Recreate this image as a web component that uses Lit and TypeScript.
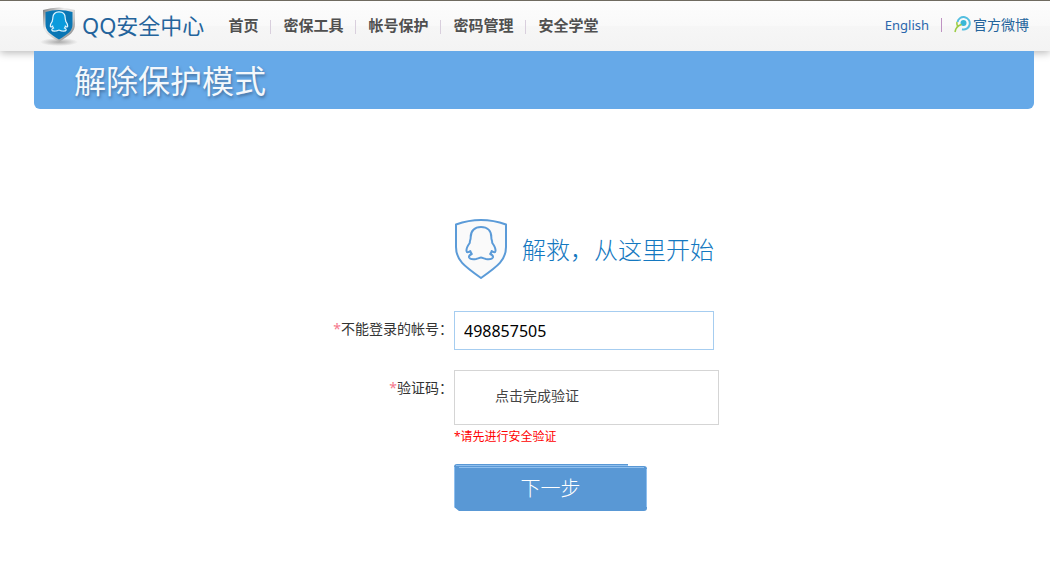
import { LitElement, html, css, svg } from "lit";
import { customElement, state } from "lit/decorators.js";

const PENGUIN =
  "M26 8C19.500 8 15.700 12 15.700 18 15.700 19.800 15.600 20.500 15.100 21.500 14.700 22.500 15 23 14.700 24 12.500 27 11.200 29.500 11.500 32 11.700 34 13.300 33.500 15.300 32 15.500 33.500 16 34 16.800 35 14.500 36 13.700 37 14 38.300 14.700 40.500 18.500 40.300 21 40 23.500 39.600 24.500 38.500 26 38.500 27.500 38.500 28.500 39.600 31 40 33.500 40.300 37.300 40.500 38 38.300 38.300 37 37.500 36 35.200 35 36 34 36.500 33.500 36.700 32 38.700 33.500 40.300 34 40.500 32 40.800 29.500 39.500 27 37.300 24 37 23 37.300 22.500 36.900 21.500 36.400 20.500 36.300 19.800 36.300 18 36.300 12 32.500 8 26 8z";
const SHIELD = "M1 5.500Q26-3.500 51 5.500V28C51 41 43 47 26 59 9 47 1 41 1 28z";

@customElement("app-root")
export class AppRoot extends LitElement {
  static styles = css`
    :host {
      display: block;
      min-height: 100vh;
      background: #fff;
      color: #333;
      font: 14px/20px "Noto Sans", "Noto Sans CJK SC", sans-serif;
    }
    a { text-decoration: none; color: inherit; }
    .top {
      box-sizing: border-box;
      height: 51px;
      padding: 0 21px 3px 40px;
      display: flex;
      align-items: center;
      border-top: 1px solid #6f6b60;
      background: linear-gradient(#fdfdfd, #f9f9f9 50%, #f6f6f6 51%, #f3f3f3);
      box-shadow: 0 2px 8px rgba(0, 0, 0, 0.28);
    }
    .brand {
      display: flex;
      align-items: center;
      gap: 4px;
      color: #24649c;
      font: 22px/30px "Noto Sans", "Noto Sans CJK SC", sans-serif;
    }
    .brand svg { display: block; width: 38px; height: 42px; }
    .nav {
      display: flex;
      flex: 1;
      padding-left: 24px;
      font: bold 15px/20px "Noto Sans CJK SC", sans-serif;
      color: #505050;
    }
    .nav a + a::before {
      content: "";
      display: inline-block;
      width: 1px;
      height: 14px;
      margin: 0 12px;
      vertical-align: -3px;
      background: #d9cfdd;
    }
    .links { display: flex; align-items: center; color: #24649c; }
    .english { font-size: 13px; color: #2a66ac; }
    .bar { width: 1px; height: 14px; margin: 0 12px; background: #bf93c3; }
    .weibo { display: flex; align-items: center; gap: 2px; }
    .weibo svg { display: block; width: 17px; height: 17px; }
    .banner {
      position: relative;
      margin: 0 16px 0 34px;
      padding: 8px 40px 10px;
      border-radius: 0 0 6px 6px;
      background: #66a9e8;
    }
    h1 {
      margin: 0;
      color: #f4f8fc;
      font: 32px/40px "Noto Sans CJK SC", sans-serif;
      text-shadow: 1px 2px 3px rgba(40, 60, 90, 0.5);
    }
    .form {
      display: grid;
      grid-template-columns: 454px minmax(0, 265px);
      padding-top: 109px;
    }
    .intro {
      grid-column: 2;
      display: flex;
      align-items: center;
      gap: 14px;
      margin-bottom: 31px;
    }
    .intro svg { display: block; flex: none; width: 54px; height: 62px; }
    h2 {
      margin: 0;
      color: #1478c0;
      white-space: nowrap;
      font: 300 24px/32px "Noto Sans CJK SC", sans-serif;
    }
    .label { justify-self: end; padding: 8px 1px 0 0; }
    .label i { font-style: normal; color: #f5788c; }
    input {
      box-sizing: border-box;
      width: 260px;
      height: 39px;
      margin: 0 0 20px;
      padding: 0 9px;
      border: 1px solid #a6cdf0;
      border-radius: 0;
      background: #fff;
      color: #000;
      font: 16px/24px "Noto Sans", sans-serif;
      outline: none;
    }
    .verify {
      display: block;
      box-sizing: border-box;
      width: 100%;
      height: 55px;
      padding: 0 40px 6px;
      border: 1px solid #d5d5d5;
      background: #fff;
      color: #444;
      text-align: left;
      font: 14px/20px "Noto Sans CJK SC", sans-serif;
    }
    .error {
      margin: 3px 0 18px;
      color: #f00;
      font-size: 12px;
      line-height: 18px;
    }
    .next {
      position: relative;
      display: block;
      width: 193px;
      height: 47px;
      padding: 0;
      border: 0;
      background: none;
      color: #fff;
      font: 300 20px/45px "Noto Sans CJK SC", sans-serif;
    }
    .next svg { position: absolute; inset: 0; }
    .next span { position: relative; }
  `;

  @state() private account = "498857505";

  render() {
    const items = ["首页", "密保工具", "帐号保护", "密码管理", "安全学堂"];
    return html`
      <header class="top">
        <a class="brand" href="#">
          <svg viewBox="0 0 38 42">
            <defs>
              <linearGradient id="metal" x2="1" y2="1">
                <stop stop-color="#777" /><stop offset=".35" stop-color="#eee" />
                <stop offset=".65" stop-color="#c8c8c8" /><stop offset="1" stop-color="#666" />
              </linearGradient>
              <radialGradient id="ground"><stop stop-color="#aaa" /><stop offset="1" stop-color="#aaa" stop-opacity="0" /></radialGradient>
            </defs>
            <ellipse cx="19" cy="38" rx="19" ry="4" fill="url(#ground)" />
            <path d="M3 6Q19 1 35 6v14c0 8-5 11-16 18C8 31 3 28 3 20z" fill="url(#metal)" />
            <path d="M5.500 8Q19 4 32.500 8v12c0 7-4 9.500-13.500 15.500C9.500 29.500 5.500 27 5.500 20z" fill="#0a76b4" />
            <g transform="translate(3.400 3) scale(.6 .6)">
              ${svg`<path d=${PENGUIN} fill="#0b9bdc" stroke="#e4f6ff" stroke-width="2" />`}
            </g>
          </svg>
          <span>QQ安全中心</span>
        </a>
        <nav class="nav">${items.map((t) => html`<a href="#">${t}</a>`)}</nav>
        <div class="links">
          <a class="english" href="#">English</a><span class="bar"></span>
          <a class="weibo" href="#">
            <svg viewBox="0 0 17 17" fill="none">
              <path d="M3.500 6A6.200 6.200 0 1 1 8 13.200" stroke="#55bfe0" stroke-width="2" />
              <circle cx="9.500" cy="7" r="3" fill="#38b7d6" />
              <path d="M7.500 8.500Q2 10 1 16M3 6Q2.500 8 3.500 10" stroke="#9ccc45" stroke-width="1.600" />
            </svg>
            官方微博
          </a>
        </div>
      </header>
      <div class="banner"><h1>解除保护模式</h1></div>
      <form class="form" @submit=${(e: Event) => e.preventDefault()}>
        <div class="intro">
          <svg viewBox="0 0 54 62">
            <g transform="translate(1 1)" fill="#fafafa" stroke="#5b9bd8" stroke-width="2" stroke-linejoin="round">
              ${svg`<path d=${SHIELD} /><path d=${PENGUIN} />`}
            </g>
          </svg>
          <h2>解救，从这里开始</h2>
        </div>
        <label class="label" for="account"><i>*</i>不能登录的帐号：</label>
        <input id="account" type="text" .value=${this.account}
          @input=${(e: Event) => (this.account = (e.target as HTMLInputElement).value)} />
        <label class="label" for="verify"><i>*</i>验证码：</label>
        <div>
          <button class="verify" id="verify" type="button">点击完成验证</button>
          <p class="error" role="alert">*请先进行安全验证</p>
          <button class="next" type="submit">
            <svg width="193" height="47" viewBox="0 0 193 47">
              <path d="M3 0H174V2H190Q193 2 193 5V44Q193 47 190 47H5L0 43V3Q0 0 3 0z" fill="#5998d5" />
              <path d="M2 1.500H174M5 3.500H190M.5 3V43M192.500 5V43" stroke="#8fbfee" fill="none" />
            </svg>
            <span>下一步</span>
          </button>
        </div>
      </form>
    `;
  }
}
